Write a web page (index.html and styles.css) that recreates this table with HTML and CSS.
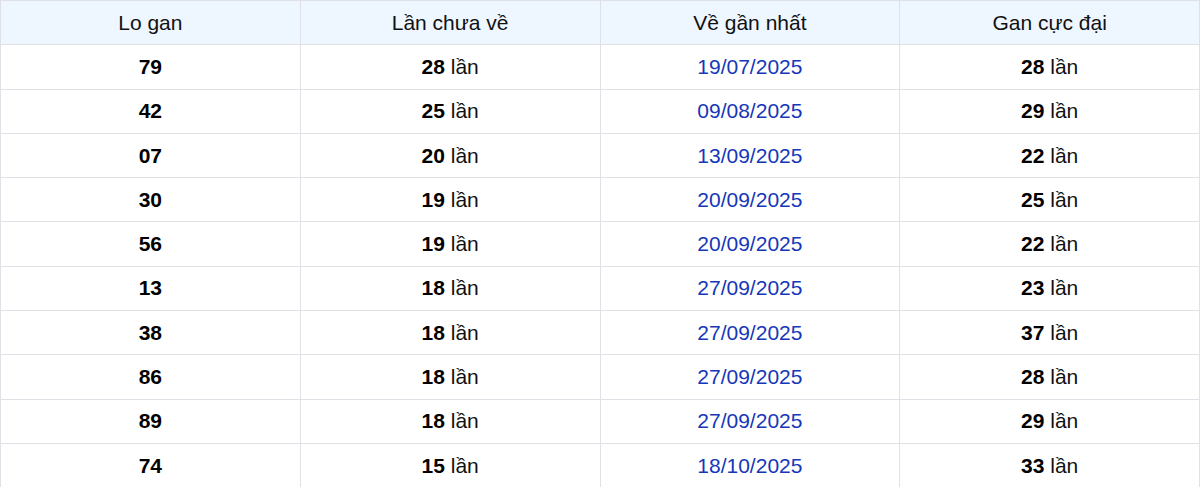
FILE: index.html
```html
<!DOCTYPE html>
<html lang="vi">
<head>
<meta charset="utf-8">
<title>Lo gan</title>
<link rel="stylesheet" href="styles.css">
</head>
<body>
<table class="gan-table">
  <thead>
    <tr>
      <th>Lo gan</th>
      <th>Lần chưa về</th>
      <th>Về gần nhất</th>
      <th>Gan cực đại</th>
    </tr>
  </thead>
  <tbody>
    <tr><td><b>79</b></td><td><b>28</b> lần</td><td class="date">19/07/2025</td><td><b>28</b> lần</td></tr>
    <tr><td><b>42</b></td><td><b>25</b> lần</td><td class="date">09/08/2025</td><td><b>29</b> lần</td></tr>
    <tr><td><b>07</b></td><td><b>20</b> lần</td><td class="date">13/09/2025</td><td><b>22</b> lần</td></tr>
    <tr><td><b>30</b></td><td><b>19</b> lần</td><td class="date">20/09/2025</td><td><b>25</b> lần</td></tr>
    <tr><td><b>56</b></td><td><b>19</b> lần</td><td class="date">20/09/2025</td><td><b>22</b> lần</td></tr>
    <tr><td><b>13</b></td><td><b>18</b> lần</td><td class="date">27/09/2025</td><td><b>23</b> lần</td></tr>
    <tr><td><b>38</b></td><td><b>18</b> lần</td><td class="date">27/09/2025</td><td><b>37</b> lần</td></tr>
    <tr><td><b>86</b></td><td><b>18</b> lần</td><td class="date">27/09/2025</td><td><b>28</b> lần</td></tr>
    <tr><td><b>89</b></td><td><b>18</b> lần</td><td class="date">27/09/2025</td><td><b>29</b> lần</td></tr>
    <tr><td><b>74</b></td><td><b>15</b> lần</td><td class="date">18/10/2025</td><td><b>33</b> lần</td></tr>
  </tbody>
</table>
</body>
</html>
```

FILE: styles.css
```css
html, body {
  margin: 0;
  padding: 0;
  background: #ffffff;
}

body {
  font-family: "Liberation Sans", Arial, sans-serif;
  color: #111111;
}

.gan-table {
  width: 1200px;
  border-collapse: collapse;
  table-layout: fixed;
  font-size: 21px;
}

.gan-table th,
.gan-table td {
  border: 1px solid #dfe1e6;
  text-align: center;
  vertical-align: middle;
  padding: 0;
  height: 43.3px;
  line-height: 24px;
}

.gan-table th {
  font-weight: normal;
  background: #eef6ff;
  color: #111111;
}

.gan-table b {
  font-weight: bold;
  color: #000000;
}

.gan-table .date {
  color: #1537b8;
}
```
